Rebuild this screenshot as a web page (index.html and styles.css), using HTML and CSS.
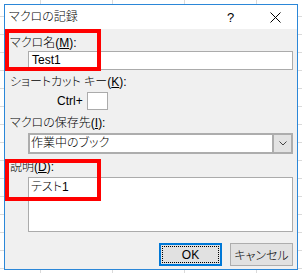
FILE: index.html
```html
<!DOCTYPE html>
<html lang="ja">
<head>
  <meta charset="UTF-8">
  <title>マクロの記録</title>
  <link rel="stylesheet" href="styles.css">
</head>
<body>
  <div class="dialog">
    <div class="titlebar">
      <span class="title">マクロの記録</span>
      <span class="caption-btn help">?</span>
      <span class="caption-btn close">
        <svg width="11" height="11" viewBox="0 0 11 11">
          <path d="M0.5 0.5 L10.5 10.5 M10.5 0.5 L0.5 10.5" stroke="#000" stroke-width="1" fill="none"/>
        </svg>
      </span>
    </div>

    <div class="content">
      <div class="label label-first">マクロ名(<u>M</u>):</div>
      <div class="field textbox">Test1</div>

      <div class="label label-shortcut">ショートカット キー(<u>K</u>):</div>
      <div class="shortcut">
        <span>Ctrl+</span>
        <span class="key-box"></span>
      </div>

      <div class="label">マクロの保存先(<u>I</u>):</div>
      <div class="field combo">
        <span class="combo-text">作業中のブック</span>
        <span class="combo-arrow">
          <svg width="8" height="5" viewBox="0 0 8 5">
            <path d="M0.5 0.5 L4 4 L7.5 0.5" stroke="#444" stroke-width="1" fill="none"/>
          </svg>
        </span>
      </div>

      <div class="label">説明(<u>D</u>):</div>
      <div class="field textarea">テスト1</div>

      <div class="buttons">
        <div class="btn btn-default"><span class="focus">OK</span></div>
        <div class="btn">キャンセル</div>
      </div>
    </div>

    <!-- annotation boxes -->
    <div class="marker marker-name"></div>
    <div class="marker marker-desc"></div>
  </div>
</body>
</html>
```

FILE: styles.css
```css
body {
  margin: 0;
  padding: 4px 0 0 4px;
  width: 302px;
  height: 273px;
  box-sizing: border-box;
  overflow: hidden;
  background-color: #fff;
  background-image:
    linear-gradient(#dadada 1px, transparent 1px),
    linear-gradient(90deg, #dadada 1px, transparent 1px);
  background-size: 100% 18px, 72px 100%;
  background-position: 0 16px, 40px 0;
  font-family: "Liberation Sans", "Noto Sans CJK JP", sans-serif;
  font-size: 12px;
  font-weight: 300;
  font-feature-settings: "palt";
  color: #000;
}
.dialog {
  position: relative;
  width: 294px;
  height: 266px;
  box-sizing: border-box;
  border: 1px solid #2b87d8;
  background-color: #f0f0f0;
}
.titlebar {
  display: flex;
  align-items: center;
  height: 24px;
  background-color: #fff;
}
.title {
  padding-left: 4px;
  line-height: 14px;
}
.caption-btn {
  display: flex;
  align-items: center;
  justify-content: center;
  height: 24px;
}
.help {
  margin-left: auto;
  width: 45px;
  font-size: 13px;
}
.close {
  width: 44px;
}
.content {
  padding: 0 4px 0 5px;
}
.label {
  line-height: 14px;
  height: 14px;
  margin-top: 6px;
}
.label-first {
  margin-top: 7px;
}
.label-shortcut {
  margin-top: 5px;
}
.field {
  margin-left: 18px;
  width: 265px;
  box-sizing: border-box;
  background-color: #fff;
  border: 1px solid #ababab;
}
.textbox {
  margin-top: 1px;
  height: 19px;
  padding-left: 3px;
  line-height: 17px;
}
.shortcut {
  display: flex;
  align-items: center;
  margin-top: 3px;
  height: 18px;
  padding-left: 47px;
}
.key-box {
  width: 21px;
  height: 18px;
  margin-left: 4px;
  box-sizing: border-box;
  background-color: #fff;
  border: 1px solid #ababab;
}
.combo {
  display: flex;
  margin-top: 3px;
  height: 21px;
  border: 2px solid #adadad;
}
.combo-text {
  flex: 1;
  padding-left: 1px;
  line-height: 17px;
}
.combo-arrow {
  display: flex;
  align-items: center;
  justify-content: center;
  width: 17px;
  background-color: #e3e3e3;
  border-left: 2px solid #adadad;
}
.textarea {
  margin-top: 3px;
  height: 55px;
  padding: 2px 0 0 2px;
  line-height: 14px;
}
.buttons {
  display: flex;
  justify-content: flex-end;
  gap: 8px;
  margin-top: 11px;
}
.btn {
  display: flex;
  align-items: center;
  justify-content: center;
  width: 63px;
  height: 23px;
  box-sizing: border-box;
  background-color: #e1e1e1;
  border: 1px solid #adadad;
}
.btn-default {
  border: 2px solid #0078d7;
  padding: 1px;
}
.focus {
  display: flex;
  align-items: center;
  justify-content: center;
  width: 100%;
  height: 100%;
  box-sizing: border-box;
  border: 1px dotted #000;
}
.marker {
  position: absolute;
  left: 0;
  width: 96px;
  height: 42px;
  box-sizing: border-box;
  border: 4px solid #ff0000;
}
.marker-name {
  top: 24px;
}
.marker-desc {
  top: 154px;
}
```
